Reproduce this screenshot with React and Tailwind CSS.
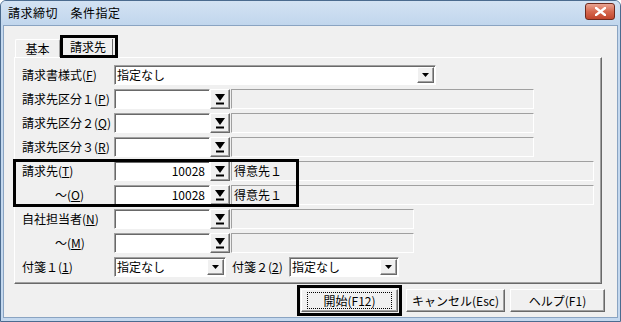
import React from 'react'

const sunkenWhite =
  'border border-t-[#a0a0a0] border-l-[#a0a0a0] border-b-white border-r-white shadow-[inset_1px_1px_0_#696969] bg-white'
const sunkenGray =
  'border border-t-[#a0a0a0] border-l-[#a0a0a0] border-b-white border-r-white bg-[#f0f0f0]'
const raised =
  'border border-t-white border-l-white border-b-[#696969] border-r-[#696969] shadow-[inset_-1px_-1px_0_#a0a0a0] bg-[#f0f0f0]'

function Label({ text, mn, tail, indent }) {
  return (
    <div className={`w-[92px] shrink-0 whitespace-nowrap ${indent ? 'pl-[33px]' : ''}`}>
      {text}(<span className="underline">{mn}</span>){tail}
    </div>
  )
}

function FilterBtn() {
  return (
    <div className={`w-[20px] h-[20px] shrink-0 flex items-center justify-center ${raised}`}>
      <svg width="12" height="12" viewBox="0 0 12 12">
        <polygon points="1,1 11,1 6,8" fill="#000" />
        <rect x="2" y="9.5" width="8" height="2" fill="#000" />
      </svg>
    </div>
  )
}

function Combo({ w, text }) {
  return (
    <div className={`h-[20px] shrink-0 flex items-center ${sunkenWhite}`} style={{ width: w }}>
      <div className="flex-1 pl-[2px] leading-none">{text}</div>
      <div className={`w-[17px] h-[16px] mr-[1px] flex items-center justify-center ${raised}`}>
        <svg width="7" height="4" viewBox="0 0 7 4">
          <polygon points="0,0 7,0 3.5,4" fill="#000" />
        </svg>
      </div>
    </div>
  )
}

function CodeRow({ label, mn, indent, value, name, grayW }) {
  return (
    <div className="flex items-center h-[20px]">
      <Label text={label} mn={mn} indent={indent} />
      <div className={`w-[96px] h-[20px] shrink-0 text-right pr-[4px] leading-[18px] ${sunkenWhite}`}>
        {value}
      </div>
      <FilterBtn />
      <div
        className={`h-[20px] ml-[1px] shrink-0 pl-[2px] leading-[18px] ${sunkenGray}`}
        style={{ width: grayW }}
      >
        {name}
      </div>
    </div>
  )
}

function Btn({ children, w, focus }) {
  return (
    <div
      className={`h-[23px] flex items-center justify-center ${raised}`}
      style={{ width: w }}
    >
      {focus ? (
        <span className="border border-dotted border-black px-[15px] leading-[15px]">{children}</span>
      ) : (
        children
      )}
    </div>
  )
}

export default function App() {
  return (
    <div className="w-[621px] h-[322px] bg-[#c4d8ee] border border-[#4b6b8f] rounded-t-[6px] flex flex-col text-[12px] text-black font-['Noto_Sans_CJK_JP','Noto_Sans_CJK_SC',sans-serif] overflow-hidden">
      {/* title bar */}
      <div className="h-[24px] shrink-0 flex items-center justify-between pl-[7px] pr-[5px] bg-gradient-to-b from-[#d3e2f3] to-[#c1d6ed]">
        <span className="tracking-[0.5px]">請求締切　条件指定</span>
        <div className="w-[30px] h-[17px] mt-[-4px] rounded-[3px] border border-[#6d2a1e] bg-gradient-to-b from-[#e8a493] via-[#d5684f] to-[#c1452c] flex items-center justify-center">
          <svg width="11" height="9" viewBox="0 0 11 9">
            <path d="M1 1 L10 8 M10 1 L1 8" stroke="#fff" strokeWidth="2.4" strokeLinecap="square" />
          </svg>
        </div>
      </div>

      {/* client */}
      <div className="flex-1 mx-[2px] mb-[3px] bg-[#f0f0f0] border border-[#8aa4c2] flex flex-col">
        {/* tabs */}
        <div className="h-[21px] mt-[10px] ml-[10px] flex items-end">
          <div className="w-[45px] h-[18px] ml-[1px] border-t border-l border-white border-r border-r-[#a0a0a0] rounded-t-[2px] flex items-center justify-center">
            基本
          </div>
          <div className="relative z-10 -mb-[1px] h-[23px] w-[58px] border-[3px] border-black bg-[#f0f0f0] flex items-center justify-center pr-[2px]">
            請求先
            <div className="absolute right-[2px] top-[1px] bottom-0 w-[1px] bg-[#696969]" />
          </div>
        </div>

        {/* panel */}
        <div className="ml-[10px] w-[588px] h-[227px] border-t border-l border-white border-b border-r border-b-[#696969] border-r-[#696969] shadow-[inset_-1px_-1px_0_#a0a0a0] pt-[7px] pl-[7px] flex flex-col gap-[4px]">
          <div className="flex items-center h-[20px]">
            <Label text="請求書様式" mn="F" />
            <Combo w={322} text="指定なし" />
          </div>
          <CodeRow label="請求先区分１" mn="P" grayW={303} />
          <CodeRow label="請求先区分２" mn="Q" grayW={303} />
          <CodeRow label="請求先区分３" mn="R" grayW={303} />
          <div className="relative flex flex-col gap-[4px]">
            <CodeRow label="請求先" mn="T" value="10028" name="得意先１" grayW={363} />
            <CodeRow label="～" mn="O" indent value="10028" name="得意先１" grayW={363} />
            <div className="absolute left-[-9px] top-[-2px] bottom-[-2px] w-[286px] border-[3px] border-black pointer-events-none" />
          </div>
          <CodeRow label="自社担当者" mn="N" grayW={183} />
          <CodeRow label="～" mn="M" indent grayW={183} />
          <div className="flex items-center h-[20px]">
            <Label text="付箋１" mn="1" />
            <Combo w={112} text="指定なし" />
            <span className="ml-[6px] w-[57px] whitespace-nowrap">
              付箋２(<span className="underline">2</span>)
            </span>
            <Combo w={110} text="指定なし" />
          </div>
        </div>

        {/* buttons */}
        <div className="mt-[1px] flex items-center justify-end pr-[12px] gap-[4px]">
          <div className="border-[3px] border-black p-[1px]">
            <Btn w={97} focus>
              開始(F12)
            </Btn>
          </div>
          <Btn w={99}>キャンセル(Esc)</Btn>
          <div className="ml-[1px]">
            <Btn w={95}>ヘルプ(F1)</Btn>
          </div>
        </div>
      </div>
    </div>
  )
}
